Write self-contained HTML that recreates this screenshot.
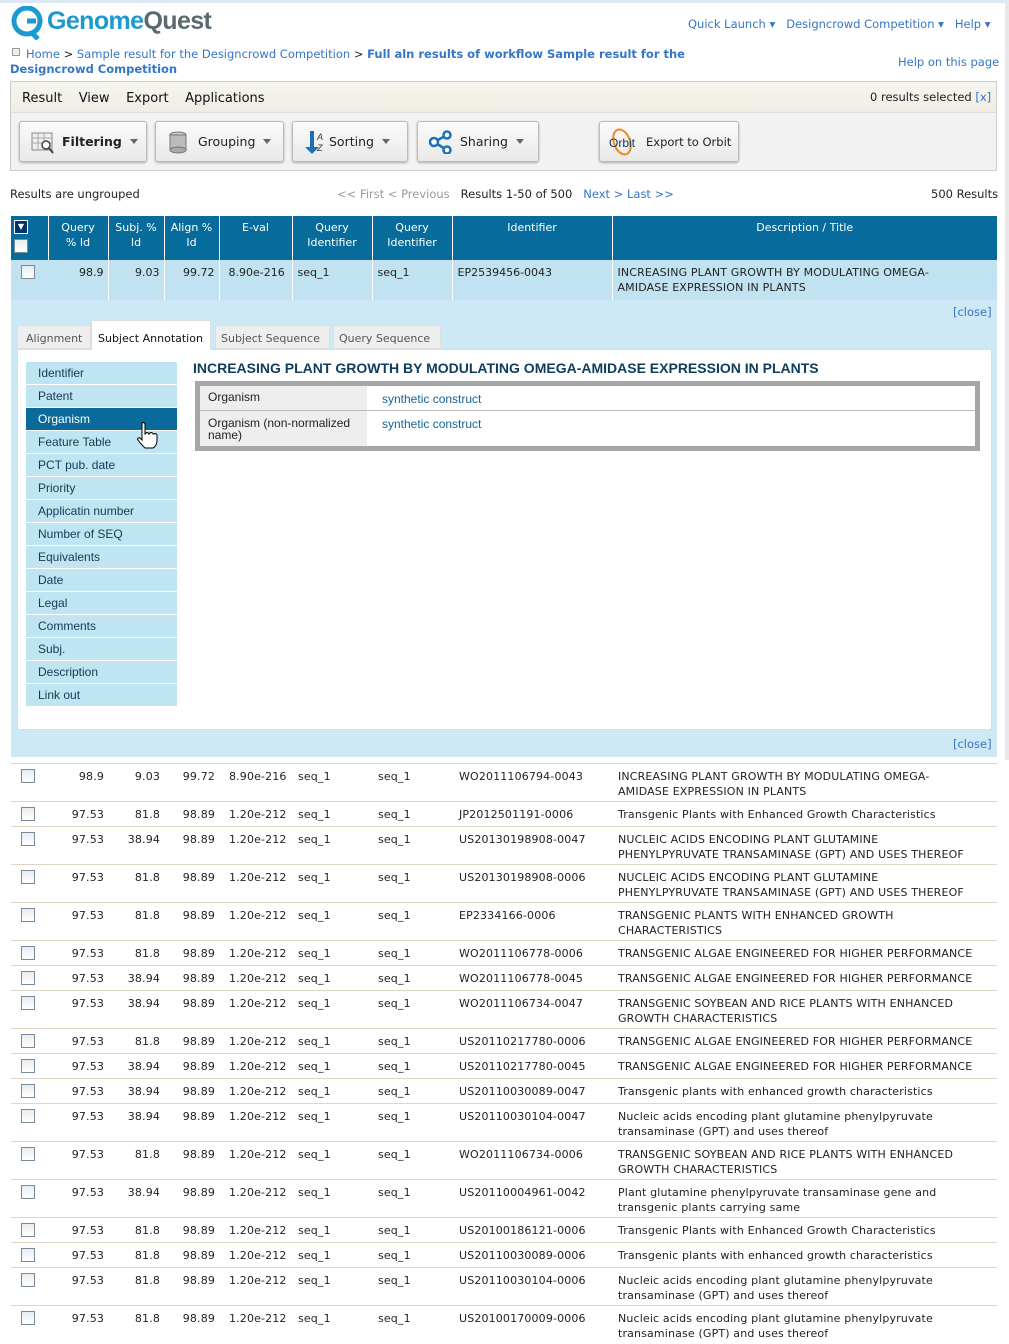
<!DOCTYPE html>
<html><head><meta charset="utf-8"><style>
*{box-sizing:border-box;margin:0;padding:0}
body{width:1009px;height:1337px;overflow:hidden;background:#fff;font-family:"DejaVu Sans","Liberation Sans",sans-serif;font-size:11px;color:#222;position:relative}
.a{position:absolute}
a,.lk{color:#3576c6;text-decoration:none}
.btn{position:absolute;top:121px;height:41px;border:1px solid #bbb;border-radius:3px;background:linear-gradient(#fbfbfb,#e9e9e9);box-shadow:0 1px 2px #aaa;font-size:12.5px;display:flex;align-items:center;padding-left:10px;color:#222}
.car{display:inline-block;width:0;height:0;border-left:4px solid transparent;border-right:4px solid transparent;border-top:5px solid #666;margin-left:8px}
.cb{display:inline-block;width:14px;height:14px;border:1px solid #7a8a99;background:linear-gradient(#e8ecf0,#fff);}
table{border-collapse:collapse;table-layout:fixed;position:absolute;left:11px;width:986px}
td{vertical-align:top;line-height:15px;white-space:nowrap}
.hd td{background:#076b9c;color:#fff;text-align:center;border-right:1px solid #fff;padding-top:4px;height:44px;white-space:normal}
.rw td{border-top:1px solid #ddd8c4;padding-top:5px;letter-spacing:0.15px}
.r{text-align:right;padding-right:4px}
.menu div{height:23px;background:#bfe4f2;border-bottom:1px solid #fff;padding-left:12px;line-height:22px;font-family:"Liberation Sans",sans-serif;font-size:12px;color:#123a55}
</style></head><body>
<div class="a" style="left:0;top:0;width:1009px;height:3px;background:#dce9f5"></div>
<div class="a" style="left:1005px;top:0;width:4px;height:760px;background:#e8e8e8"></div>
<svg class="a" style="left:11px;top:6px" width="34" height="34" viewBox="0 0 34 34"><circle cx="16" cy="15" r="13" fill="none" stroke="#1b9ad0" stroke-width="5"/><path d="M16 15h9" stroke="#1b9ad0" stroke-width="5"/><path d="M20 26l7 7" stroke="#1b9ad0" stroke-width="5"/></svg>
<div class="a" style="left:47px;top:7px;font-family:'Liberation Sans',sans-serif;font-weight:bold;font-size:25px;letter-spacing:-0.6px"><span style="color:#1b9ad0">Genome</span><span style="color:#5a6a70">Quest</span></div>
<div class="a lk" style="left:688px;top:17px;font-size:11.5px">Quick Launch ▾ &nbsp;&nbsp;Designcrowd Competition ▾ &nbsp;&nbsp;Help ▾</div>
<div class="a" style="left:12px;top:48px;width:8px;height:8px;border:1px solid #999;background:#eee"></div>
<div class="a" style="left:26px;top:47px;font-size:11.5px"><span class="lk">Home</span> &gt; <span class="lk">Sample result for the Designcrowd Competition</span> &gt; <b class="lk">Full aln results of workflow Sample result for the</b></div>
<div class="a" style="left:10px;top:62px;font-size:11.5px"><b class="lk">Designcrowd Competition</b></div>
<div class="a lk" style="left:898px;top:55px;font-size:11.5px">Help on this page</div>
<div class="a" style="left:10px;top:81px;width:987px;height:90px;border:1px solid #ccc;background:#f2f2f2"></div>
<div class="a" style="left:11px;top:82px;width:985px;height:31px;background:linear-gradient(#f6f5ef,#efede3);border-bottom:1px solid #ddd"></div>
<div class="a" style="left:22px;top:91px;font-size:13px;color:#111">Result &nbsp;&nbsp;&nbsp;View &nbsp;&nbsp;&nbsp;Export &nbsp;&nbsp;&nbsp;Applications</div>
<div class="a" style="left:870px;top:90px;font-size:11.5px">0 results selected <span class="lk">[x]</span></div>
<div class="btn" style="left:19px;width:128px"><svg width="26" height="24"><rect x="2" y="3" width="20" height="17" fill="#eee" stroke="#888"/><path d="M2 8h20M2 13h20M8 3v17M14 3v17" stroke="#aaa"/><circle cx="16" cy="15" r="4" fill="#fff" stroke="#444" stroke-width="1.5"/><path d="M19 18l4 5" stroke="#444" stroke-width="2"/></svg><b style="margin-left:6px">Filtering</b><span class="car"></span></div>
<div class="btn" style="left:155px;width:129px"><svg width="26" height="24"><ellipse cx="12" cy="5" rx="8" ry="3" fill="#ccc" stroke="#777"/><rect x="4" y="5" width="16" height="15" fill="#bbb" stroke="#777"/><ellipse cx="12" cy="20" rx="8" ry="3" fill="#aaa" stroke="#777"/></svg><span style="margin-left:6px">Grouping</span><span class="car"></span></div>
<div class="btn" style="left:292px;width:116px"><svg width="24" height="26"><path d="M7 2v16h-5l7 7 7-7h-5v-16z" fill="#1d6fb8"/><text x="14" y="11" font-size="9" font-family="Liberation Sans" fill="#333" font-style="italic">A</text><text x="14" y="22" font-size="9" font-family="Liberation Sans" fill="#333" font-style="italic">Z</text></svg><span style="margin-left:2px">Sorting</span><span class="car"></span></div>
<div class="btn" style="left:417px;width:122px"><svg width="26" height="24"><path d="M6 12L19 5M6 12l13 8" stroke="#1d6fb8" stroke-width="2.5"/><circle cx="6" cy="12" r="4" fill="#fff" stroke="#1d6fb8" stroke-width="2.5"/><circle cx="19" cy="5" r="3.5" fill="#fff" stroke="#1d6fb8" stroke-width="2.5"/><circle cx="19" cy="20" r="3.5" fill="#fff" stroke="#1d6fb8" stroke-width="2.5"/></svg><span style="margin-left:6px">Sharing</span><span class="car"></span></div>
<div class="btn" style="left:599px;width:140px;padding-left:8px"><svg width="32" height="30"><ellipse cx="14" cy="15" rx="8" ry="13" fill="none" stroke="#f08a1c" stroke-width="2" transform="rotate(-20 14 15)"/><text x="1" y="20" font-size="12" font-family="Liberation Sans" fill="#1a3550">Orbit</text></svg><span style="margin-left:6px;font-size:11.5px">Export to Orbit</span></div>
<div class="a" style="left:10px;top:187px;font-size:11.5px">Results are ungrouped</div>
<div class="a" style="left:337px;top:187px;font-size:11.5px"><span style="color:#999">&lt;&lt; First &lt; Previous</span> &nbsp; Results 1-50 of 500 &nbsp; <span class="lk">Next &gt; Last &gt;&gt;</span></div>
<div class="a" style="left:931px;top:187px;font-size:11.5px">500 Results</div>
<table style="top:216px">
<colgroup><col style="width:37px"><col style="width:60px"><col style="width:56px"><col style="width:55px"><col style="width:73px"><col style="width:80px"><col style="width:80px"><col style="width:160px"><col></colgroup>
<tr class="hd"><td style="text-align:left;padding-left:3px"><div style="width:14px;height:14px;border:1px solid #fff;background:#036;color:#fff;font-size:8px;line-height:12px;text-align:center">▼</div><span class="cb" style="margin-top:5px"></span></td><td>Query<br>% Id</td><td>Subj. %<br>Id</td><td>Align %<br>Id</td><td>E-val</td><td>Query<br>Identifier</td><td>Query<br>Identifier</td><td>Identifier</td><td style="border-right:0">Description / Title</td></tr>
<tr style="background:#c1e3f1;height:40px"><td style="padding:5px 0 0 10px"><span class="cb"></span></td><td class="r" style="padding-top:5px;border-right:1px solid #fff">98.9</td><td class="r" style="padding-top:5px;border-right:1px solid #fff">9.03</td><td class="r" style="padding-top:5px;border-right:1px solid #fff">99.72</td><td style="padding:5px 0 0 9px;border-right:1px solid #fff">8.90e-216</td><td style="padding:5px 0 0 5px;border-right:1px solid #fff">seq_1</td><td style="padding:5px 0 0 5px;border-right:1px solid #fff">seq_1</td><td style="padding:5px 0 0 5px;border-right:1px solid #fff">EP2539456-0043</td><td style="padding:5px 0 0 5px;letter-spacing:0.15px">INCREASING PLANT GROWTH BY MODULATING OMEGA-<br>AMIDASE EXPRESSION IN PLANTS</td></tr>
</table>
<div class="a" style="left:11px;top:300px;width:986px;height:457px;background:#cce9f5"></div>
<div class="a lk" style="left:953px;top:305px;font-size:11.5px">[close]</div>
<div class="a lk" style="left:953px;top:737px;font-size:11.5px">[close]</div>
<div class="a" style="left:17px;top:349px;width:975px;height:381px;background:#fff;border:1px solid #ddd"></div>
<div class="a" style="left:17px;top:325px;width:74px;height:24px;background:#eee;border:1px solid #ddd;color:#555;padding:6px 0 0 8px">Alignment</div>
<div class="a" style="left:91px;top:320px;width:120px;height:30px;background:#fff;border:1px solid #ddd;border-bottom:0;padding:11px 0 0 6px;color:#111">Subject Annotation</div>
<div class="a" style="left:215px;top:325px;width:115px;height:24px;background:#eee;border:1px solid #ddd;color:#555;padding:6px 0 0 5px">Subject Sequence</div>
<div class="a" style="left:333px;top:325px;width:108px;height:24px;background:#eee;border:1px solid #ddd;color:#555;padding:6px 0 0 5px">Query Sequence</div>
<div class="a menu" style="left:26px;top:362px;width:151px">
<div>Identifier</div><div>Patent</div><div style="background:#0b6a9c;color:#fff">Organism</div><div>Feature Table</div><div>PCT pub. date</div><div>Priority</div><div>Applicatin number</div><div>Number of SEQ</div><div>Equivalents</div><div>Date</div><div>Legal</div><div>Comments</div><div>Subj.</div><div>Description</div><div>Link out</div></div>
<svg class="a" style="left:136px;top:421px" width="22" height="28"><path d="M6 2c1-1 3 0 3 1v10l1-1c1-1 3 0 3 1l1-1c1-1 3 0 3 1l1 0c1-1 3 0 3 1v6c0 3-2 6-4 7h-8c-2-2-5-5-7-8-1-1 0-3 2-2l2 2v-16z" fill="#fff" stroke="#000" stroke-width="1"/></svg>
<div class="a" style="left:193px;top:360px;font-family:'Liberation Sans',sans-serif;font-weight:bold;font-size:14px;color:#0f3d5c">INCREASING PLANT GROWTH BY MODULATING OMEGA-AMIDASE EXPRESSION IN PLANTS</div>
<div class="a" style="left:195px;top:381px;width:785px;height:70px;border:5px solid #a6a6a6;background:#fff"></div>
<div class="a" style="left:200px;top:386px;width:167px;height:60px;background:#eee"></div>
<div class="a" style="left:200px;top:410px;width:775px;height:1px;background:#bbb"></div>
<div class="a" style="left:208px;top:391px;font-family:'Liberation Sans',sans-serif;font-size:12px;color:#222;line-height:12px">Organism</div>
<div class="a" style="left:208px;top:417px;font-family:'Liberation Sans',sans-serif;font-size:12px;color:#222;line-height:12px">Organism (non-normalized<br>name)</div>
<div class="a lk" style="left:382px;top:392px;font-family:'Liberation Sans',sans-serif;font-size:12px;color:#14659a">synthetic construct</div>
<div class="a lk" style="left:382px;top:417px;font-family:'Liberation Sans',sans-serif;font-size:12px;color:#14659a">synthetic construct</div>
<table style="top:763px">
<colgroup><col style="width:37px"><col style="width:60px"><col style="width:56px"><col style="width:55px"><col style="width:73px"><col style="width:80px"><col style="width:80px"><col style="width:160px"><col></colgroup>
<tbody>
<tr class="rw" style="height:38px"><td style="padding-left:10px"><span class="cb"></span></td><td class="r">98.9</td><td class="r">9.03</td><td class="r">99.72</td><td style="padding-left:10px">8.90e-216</td><td style="padding-left:6px">seq_1</td><td style="padding-left:6px">seq_1</td><td style="padding-left:7px">WO2011106794-0043</td><td style="padding-left:6px">INCREASING PLANT GROWTH BY MODULATING OMEGA-<br>AMIDASE EXPRESSION IN PLANTS</td></tr>
<tr class="rw" style="height:25px"><td style="padding-left:10px"><span class="cb"></span></td><td class="r">97.53</td><td class="r">81.8</td><td class="r">98.89</td><td style="padding-left:10px">1.20e-212</td><td style="padding-left:6px">seq_1</td><td style="padding-left:6px">seq_1</td><td style="padding-left:7px">JP2012501191-0006</td><td style="padding-left:6px">Transgenic Plants with Enhanced Growth Characteristics</td></tr>
<tr class="rw" style="height:38px"><td style="padding-left:10px"><span class="cb"></span></td><td class="r">97.53</td><td class="r">38.94</td><td class="r">98.89</td><td style="padding-left:10px">1.20e-212</td><td style="padding-left:6px">seq_1</td><td style="padding-left:6px">seq_1</td><td style="padding-left:7px">US20130198908-0047</td><td style="padding-left:6px">NUCLEIC ACIDS ENCODING PLANT GLUTAMINE<br>PHENYLPYRUVATE TRANSAMINASE (GPT) AND USES THEREOF</td></tr>
<tr class="rw" style="height:38px"><td style="padding-left:10px"><span class="cb"></span></td><td class="r">97.53</td><td class="r">81.8</td><td class="r">98.89</td><td style="padding-left:10px">1.20e-212</td><td style="padding-left:6px">seq_1</td><td style="padding-left:6px">seq_1</td><td style="padding-left:7px">US20130198908-0006</td><td style="padding-left:6px">NUCLEIC ACIDS ENCODING PLANT GLUTAMINE<br>PHENYLPYRUVATE TRANSAMINASE (GPT) AND USES THEREOF</td></tr>
<tr class="rw" style="height:38px"><td style="padding-left:10px"><span class="cb"></span></td><td class="r">97.53</td><td class="r">81.8</td><td class="r">98.89</td><td style="padding-left:10px">1.20e-212</td><td style="padding-left:6px">seq_1</td><td style="padding-left:6px">seq_1</td><td style="padding-left:7px">EP2334166-0006</td><td style="padding-left:6px">TRANSGENIC PLANTS WITH ENHANCED GROWTH<br>CHARACTERISTICS</td></tr>
<tr class="rw" style="height:25px"><td style="padding-left:10px"><span class="cb"></span></td><td class="r">97.53</td><td class="r">81.8</td><td class="r">98.89</td><td style="padding-left:10px">1.20e-212</td><td style="padding-left:6px">seq_1</td><td style="padding-left:6px">seq_1</td><td style="padding-left:7px">WO2011106778-0006</td><td style="padding-left:6px">TRANSGENIC ALGAE ENGINEERED FOR HIGHER PERFORMANCE</td></tr>
<tr class="rw" style="height:25px"><td style="padding-left:10px"><span class="cb"></span></td><td class="r">97.53</td><td class="r">38.94</td><td class="r">98.89</td><td style="padding-left:10px">1.20e-212</td><td style="padding-left:6px">seq_1</td><td style="padding-left:6px">seq_1</td><td style="padding-left:7px">WO2011106778-0045</td><td style="padding-left:6px">TRANSGENIC ALGAE ENGINEERED FOR HIGHER PERFORMANCE</td></tr>
<tr class="rw" style="height:38px"><td style="padding-left:10px"><span class="cb"></span></td><td class="r">97.53</td><td class="r">38.94</td><td class="r">98.89</td><td style="padding-left:10px">1.20e-212</td><td style="padding-left:6px">seq_1</td><td style="padding-left:6px">seq_1</td><td style="padding-left:7px">WO2011106734-0047</td><td style="padding-left:6px">TRANSGENIC SOYBEAN AND RICE PLANTS WITH ENHANCED<br>GROWTH CHARACTERISTICS</td></tr>
<tr class="rw" style="height:25px"><td style="padding-left:10px"><span class="cb"></span></td><td class="r">97.53</td><td class="r">81.8</td><td class="r">98.89</td><td style="padding-left:10px">1.20e-212</td><td style="padding-left:6px">seq_1</td><td style="padding-left:6px">seq_1</td><td style="padding-left:7px">US20110217780-0006</td><td style="padding-left:6px">TRANSGENIC ALGAE ENGINEERED FOR HIGHER PERFORMANCE</td></tr>
<tr class="rw" style="height:25px"><td style="padding-left:10px"><span class="cb"></span></td><td class="r">97.53</td><td class="r">38.94</td><td class="r">98.89</td><td style="padding-left:10px">1.20e-212</td><td style="padding-left:6px">seq_1</td><td style="padding-left:6px">seq_1</td><td style="padding-left:7px">US20110217780-0045</td><td style="padding-left:6px">TRANSGENIC ALGAE ENGINEERED FOR HIGHER PERFORMANCE</td></tr>
<tr class="rw" style="height:25px"><td style="padding-left:10px"><span class="cb"></span></td><td class="r">97.53</td><td class="r">38.94</td><td class="r">98.89</td><td style="padding-left:10px">1.20e-212</td><td style="padding-left:6px">seq_1</td><td style="padding-left:6px">seq_1</td><td style="padding-left:7px">US20110030089-0047</td><td style="padding-left:6px">Transgenic plants with enhanced growth characteristics</td></tr>
<tr class="rw" style="height:38px"><td style="padding-left:10px"><span class="cb"></span></td><td class="r">97.53</td><td class="r">38.94</td><td class="r">98.89</td><td style="padding-left:10px">1.20e-212</td><td style="padding-left:6px">seq_1</td><td style="padding-left:6px">seq_1</td><td style="padding-left:7px">US20110030104-0047</td><td style="padding-left:6px">Nucleic acids encoding plant glutamine phenylpyruvate<br>transaminase (GPT) and uses thereof</td></tr>
<tr class="rw" style="height:38px"><td style="padding-left:10px"><span class="cb"></span></td><td class="r">97.53</td><td class="r">81.8</td><td class="r">98.89</td><td style="padding-left:10px">1.20e-212</td><td style="padding-left:6px">seq_1</td><td style="padding-left:6px">seq_1</td><td style="padding-left:7px">WO2011106734-0006</td><td style="padding-left:6px">TRANSGENIC SOYBEAN AND RICE PLANTS WITH ENHANCED<br>GROWTH CHARACTERISTICS</td></tr>
<tr class="rw" style="height:38px"><td style="padding-left:10px"><span class="cb"></span></td><td class="r">97.53</td><td class="r">38.94</td><td class="r">98.89</td><td style="padding-left:10px">1.20e-212</td><td style="padding-left:6px">seq_1</td><td style="padding-left:6px">seq_1</td><td style="padding-left:7px">US20110004961-0042</td><td style="padding-left:6px">Plant glutamine phenylpyruvate transaminase gene and<br>transgenic plants carrying same</td></tr>
<tr class="rw" style="height:25px"><td style="padding-left:10px"><span class="cb"></span></td><td class="r">97.53</td><td class="r">81.8</td><td class="r">98.89</td><td style="padding-left:10px">1.20e-212</td><td style="padding-left:6px">seq_1</td><td style="padding-left:6px">seq_1</td><td style="padding-left:7px">US20100186121-0006</td><td style="padding-left:6px">Transgenic Plants with Enhanced Growth Characteristics</td></tr>
<tr class="rw" style="height:25px"><td style="padding-left:10px"><span class="cb"></span></td><td class="r">97.53</td><td class="r">81.8</td><td class="r">98.89</td><td style="padding-left:10px">1.20e-212</td><td style="padding-left:6px">seq_1</td><td style="padding-left:6px">seq_1</td><td style="padding-left:7px">US20110030089-0006</td><td style="padding-left:6px">Transgenic plants with enhanced growth characteristics</td></tr>
<tr class="rw" style="height:38px"><td style="padding-left:10px"><span class="cb"></span></td><td class="r">97.53</td><td class="r">81.8</td><td class="r">98.89</td><td style="padding-left:10px">1.20e-212</td><td style="padding-left:6px">seq_1</td><td style="padding-left:6px">seq_1</td><td style="padding-left:7px">US20110030104-0006</td><td style="padding-left:6px">Nucleic acids encoding plant glutamine phenylpyruvate<br>transaminase (GPT) and uses thereof</td></tr>
<tr class="rw" style="height:38px"><td style="padding-left:10px"><span class="cb"></span></td><td class="r">97.53</td><td class="r">81.8</td><td class="r">98.89</td><td style="padding-left:10px">1.20e-212</td><td style="padding-left:6px">seq_1</td><td style="padding-left:6px">seq_1</td><td style="padding-left:7px">US20100170009-0006</td><td style="padding-left:6px">Nucleic acids encoding plant glutamine phenylpyruvate<br>transaminase (GPT) and uses thereof</td></tr>
</tbody></table>
</body></html>
